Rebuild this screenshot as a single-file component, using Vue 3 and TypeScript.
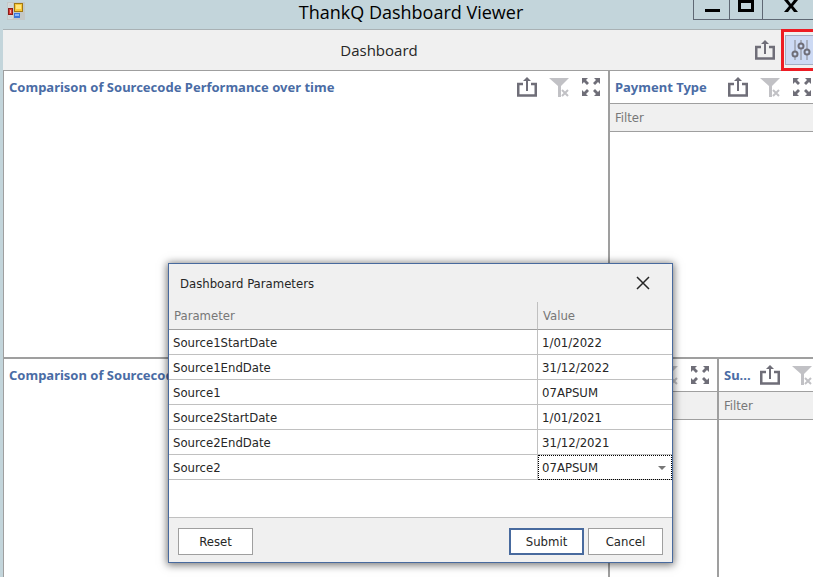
<script setup lang="ts">
import { reactive, ref } from 'vue'

type Action = 'export' | 'clear' | 'expand'

interface Pane {
  id: string
  title: string
  filter: boolean
}

interface Parameter {
  name: string
  value: string
  options?: string[]
}

const panes: Pane[] = [
  { id: 'performance', title: 'Comparison of Sourcecode Performance over time', filter: false },
  { id: 'payment', title: 'Payment Type', filter: true },
  { id: 'comparison', title: 'Comparison of Sourcecode', filter: false },
  { id: 'middle', title: '', filter: true },
  { id: 'summary', title: 'Su...', filter: true },
]

const actions: { id: Action; label: string }[] = [
  { id: 'export', label: 'Export' },
  { id: 'clear', label: 'Clear filter' },
  { id: 'expand', label: 'Maximize' },
]

const defaults: Parameter[] = [
  { name: 'Source1StartDate', value: '1/01/2022' },
  { name: 'Source1EndDate', value: '31/12/2022' },
  { name: 'Source1', value: '07APSUM' },
  { name: 'Source2StartDate', value: '1/01/2021' },
  { name: 'Source2EndDate', value: '31/12/2021' },
  { name: 'Source2', value: '07APSUM', options: ['07APSUM'] },
]

const parameters = reactive(defaults.map((p) => ({ ...p })))
const open = ref(true)

function reset() {
  parameters.forEach((p, i) => (p.value = defaults[i].value))
}
</script>

<template>
  <div class="window">
    <header class="titlebar">
      <svg class="app-icon" viewBox="0 0 18 18" aria-hidden="true">
        <rect width="18" height="18" fill="#c3c8c8" />
        <path d="M1.500 1.500h4v4h-4zM1.500 13.500h4v3h-4z" fill="#ccd4d6" stroke="#d5dadb" />
        <rect x="7.500" y="1.500" width="8" height="8" fill="#f8c838" stroke="#a17810" />
        <rect x="9" y="3" width="5" height="4" fill="#ffe57c" />
        <rect x="1.500" y="6.500" width="4" height="6" fill="#d83c34" stroke="#8d1b18" />
        <rect x="3" y="8" width="1" height="3" fill="#f6b0a5" />
        <rect x="7" y="11" width="6" height="5" fill="#3b76d8" />
        <rect x="8" y="12" width="4" height="2" fill="#8bb7fa" />
      </svg>
      <h1>ThankQ Dashboard Viewer</h1>
      <div class="controls">
        <button class="control" aria-label="Minimize">
          <svg viewBox="0 0 16 20"><path d="M1 9h15v3H1z" /></svg>
        </button>
        <button class="control small" aria-label="Restore">
          <svg viewBox="0 0 16 20"><path fill-rule="evenodd" d="M0 0h16v12H0zM3 3v6h10V3z" /></svg>
        </button>
        <button class="control wide" aria-label="Close">
          <svg viewBox="0 0 16 20"><path d="M1 0h4l3 4 3-4h4l-5 6 5 6h-4l-3-4-3 4H1l5-6z" /></svg>
        </button>
      </div>
    </header>

    <div class="toolbar">
      <h2>Dashboard</h2>
      <button class="icon-button" aria-label="Export">
        <svg viewBox="0 0 20 20">
          <path d="M6 7H1.250v11.500h17.500V7H14" class="line" /><path d="M9 3h2v11H9zM10 0l4 4H6z" />
        </svg>
      </button>
      <div class="marked">
        <button class="params-button" aria-label="Parameters" @click="open = true">
          <svg viewBox="0 0 20 20">
            <path d="M4 0v20M10 0v20M16 0v20" class="track" />
            <circle cx="4" cy="14" r="2.500" /><circle cx="10" cy="6" r="2.500" /><circle cx="16" cy="12" r="2.500" />
          </svg>
        </button>
      </div>
    </div>

    <main class="dashboard">
      <section v-for="pane in panes" :key="pane.id" class="pane" :class="pane.id">
        <header class="pane-head">
          <h3 v-if="pane.title">{{ pane.title }}</h3>
          <button v-for="a in actions" :key="a.id" class="icon-button" :class="a.id" :aria-label="a.label">
            <svg v-if="a.id === 'export'" viewBox="0 0 20 20">
              <path d="M6 7H1.250v11.500h17.500V7H14" class="line" /><path d="M9 3h2v11H9zM10 0l4 4H6z" />
            </svg>
            <svg v-else-if="a.id === 'clear'" viewBox="0 0 20 20">
              <path d="M0 1h20l-8 8v11H9V9z" /><path d="M13 13l6 6M19 13l-6 6" class="cross" />
            </svg>
            <svg v-else viewBox="0 0 20 20">
              <path d="M1 1h6L5 3l3 3-2 2-3-3-2 2zM19 1v6l-2-2-3 3-2-2 3-3-2-2zM1 19v-6l2 2 3-3 2 2-3 3 2 2zM19 19h-6l2-2-3-3 2-2 3 3 2-2z" />
            </svg>
          </button>
        </header>
        <div v-if="pane.filter" class="filter">{{ pane.id === 'middle' ? '' : 'Filter' }}</div>
      </section>
    </main>

    <div v-if="open" class="dialog" role="dialog" aria-labelledby="dialog-title">
      <header class="dialog-head">
        <h2 id="dialog-title">Dashboard Parameters</h2>
        <button class="close" aria-label="Close" @click="open = false">
          <svg viewBox="0 0 14 14"><path d="M1 1l12 12M13 1L1 13" /></svg>
        </button>
      </header>
      <table>
        <thead>
          <tr><th>Parameter</th><th class="value">Value</th></tr>
        </thead>
        <tbody>
          <tr v-for="p in parameters" :key="p.name">
            <td><label :for="p.name">{{ p.name }}</label></td>
            <td class="value">
              <div v-if="p.options" class="picker">
                <select :id="p.name" v-model="p.value">
                  <option v-for="o in p.options" :key="o">{{ o }}</option>
                </select>
                <svg viewBox="0 0 8 4" aria-hidden="true"><path d="M0 0h8L4 4z" /></svg>
              </div>
              <input v-else :id="p.name" v-model="p.value" type="text" />
            </td>
          </tr>
        </tbody>
      </table>
      <footer class="dialog-foot">
        <button class="push reset" @click="reset">Reset</button>
        <button class="push primary" @click="open = false">Submit</button>
        <button class="push" @click="open = false">Cancel</button>
      </footer>
    </div>
  </div>
</template>

<style>
body {
  margin: 0;
}
</style>

<style scoped>
* {
  box-sizing: border-box;
}
.window {
  position: relative;
  display: flex;
  flex-direction: column;
  min-height: 100vh;
  padding-left: 3px;
  overflow: hidden;
  background: #c3d5db;
  color: #262626;
  font-family: "DejaVu Sans Condensed", "Noto Sans", sans-serif;
  font-size: 13px;
}
h1,
h2,
h3 {
  margin: 0;
  font-weight: 400;
}
button,
input,
select {
  font: inherit;
  color: inherit;
  padding: 0;
  margin: 0;
  border: 0;
  border-radius: 0;
  background: none;
}
svg {
  display: block;
}
.titlebar {
  display: grid;
  grid-template-columns: 1fr auto 1fr;
  height: 29px;
  padding-left: 6px;
}
.app-icon {
  width: 18px;
  height: 18px;
  margin-top: 2px;
  margin-left: -2px;
}
h1 {
  color: #000;
  font-family: "Open Sans", "Noto Sans", sans-serif;
  font-size: 18px;
  line-height: 24px;
}
.controls {
  display: flex;
  justify-self: end;
  height: 20px;
  border-bottom: 1px solid #5f6874;
}
.control {
  display: flex;
  justify-content: center;
  width: 36px;
  border-left: 1px solid #5f6874;
}
.control.small {
  width: 33px;
}
.control.wide {
  width: 51px;
  padding-left: 6px;
}
.control svg {
  width: 16px;
  height: 20px;
}
.toolbar {
  display: flex;
  align-items: center;
  height: 42px;
  border-top: 1px solid #a9b1b4;
  border-bottom: 1px solid #9f9f9f;
  background: #f0f0f0;
}
.toolbar h2 {
  flex: 1;
  text-align: center;
  font-family: "Open Sans", "Noto Sans", sans-serif;
  font-size: 15px;
}
.icon-button {
  flex: none;
  width: 20px;
  height: 20px;
  color: #6f6e78;
}
.icon-button svg {
  width: 20px;
  height: 20px;
  fill: currentColor;
}
.icon-button.clear {
  color: #c1c1c5;
}
.icon-button .line {
  fill: none;
  stroke: currentColor;
  stroke-width: 2.5;
}
.icon-button .cross {
  stroke: currentColor;
  stroke-width: 2;
}
.marked {
  align-self: stretch;
  flex: none;
  width: 40px;
  margin: -1px -8px -1px 6px;
  padding: 3px 0 0 1px;
  border: 3px solid #ed1c24;
}
.params-button {
  display: flex;
  align-items: center;
  justify-content: center;
  width: 32px;
  height: 30px;
  border: 1px solid #a2aec4;
  background: #cddaf4;
}
.params-button svg {
  width: 20px;
  height: 20px;
  fill: #cddaf4;
  stroke: #6f6e78;
  stroke-width: 2;
}
.params-button .track {
  stroke: #a8afbf;
}
.dashboard {
  flex: 1;
  display: grid;
  grid-template-columns: minmax(0, 604fr) minmax(0, 107fr) minmax(0, 100fr);
  grid-template-rows: 286fr 218fr;
  gap: 2px;
  margin-right: -6px;
  border-left: 1px solid #9f9f9f;
  background: #9f9f9f;
}
.pane {
  overflow: hidden;
  background: #fff;
}
.payment {
  grid-column: span 2;
}
.pane-head {
  display: flex;
  align-items: center;
  gap: 12px;
  height: 32px;
  padding: 0 7px 0 5px;
}
.middle .pane-head {
  justify-content: flex-end;
}
.pane-head h3 {
  flex: 1 0 24px;
  min-width: 0;
  white-space: nowrap;
  color: #4a6ca5;
  font-family: "Noto Sans", sans-serif;
  font-size: 13px;
  font-weight: 700;
}
.filter {
  height: 29px;
  padding-left: 5px;
  border: solid #9f9f9f;
  border-width: 1px 0;
  background: #f0f0f0;
  color: #777;
  line-height: 27px;
}
.dialog {
  position: absolute;
  top: 263px;
  left: 168px;
  display: flex;
  flex-direction: column;
  width: 505px;
  height: 300px;
  border: 1px solid #486a9e;
  background: #fff;
  box-shadow: 0 1px 8px 1px rgba(0, 0, 0, 0.55);
}
.dialog-head {
  display: flex;
  align-items: center;
  justify-content: space-between;
  height: 38px;
  padding: 0 22px 0 11px;
  background: #f0f0f0;
}
.dialog-head h2 {
  font-size: 13px;
}
.close svg {
  width: 14px;
  height: 14px;
  fill: none;
  stroke: #262626;
  stroke-width: 1.5;
}
table {
  width: 100%;
  border-collapse: separate;
  border-spacing: 0;
  table-layout: fixed;
}
th {
  height: 28px;
  padding: 0 5px;
  border-bottom: 1px solid #9f9f9f;
  background: #f0f0f0;
  color: #777;
  font-weight: 400;
  text-align: left;
}
td {
  height: 25px;
  padding: 0 4px;
  border-bottom: 1px solid #c0c0c0;
}
.value {
  width: 135px;
  border-left: 1px solid #c0c0c0;
}
td.value {
  padding: 0;
}
input,
select {
  display: block;
  width: 100%;
  height: 24px;
  padding: 0 4px;
  appearance: none;
  outline: 0;
}
.picker {
  display: grid;
  align-items: center;
  margin-bottom: -1px;
  border: 1px dotted #000;
}
.picker > * {
  grid-area: 1 / 1;
}
.picker select {
  height: 23px;
  padding: 0 3px;
}
.picker svg {
  justify-self: end;
  width: 8px;
  height: 4px;
  margin-right: 5px;
  fill: #777;
  pointer-events: none;
}
.dialog-foot {
  display: flex;
  align-items: center;
  gap: 4px;
  height: 45px;
  margin-top: auto;
  padding: 3px 9px 0;
  border-top: 1px solid #c0c0c0;
  background: #f0f0f0;
}
.push {
  width: 75px;
  height: 27px;
  border: 1px solid #9f9f9f;
  background: #fff;
}
.push.primary {
  border: 2px solid #486a9e;
}
.push.reset {
  margin-right: auto;
}
</style>
